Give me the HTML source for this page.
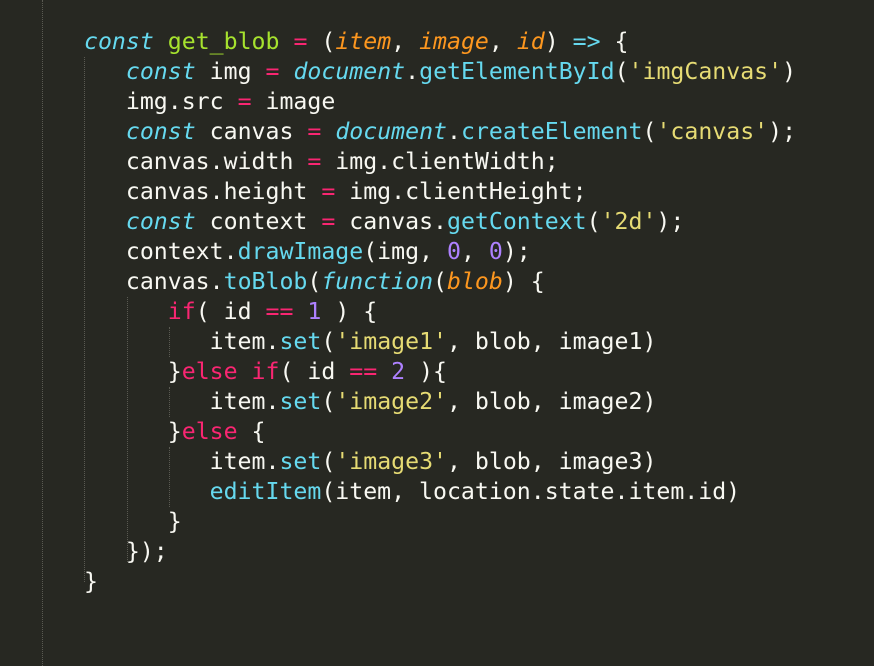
<!DOCTYPE html>
<html><head><meta charset="utf-8"><style>
body{margin:0;width:874px;height:666px;background:#272822;overflow:hidden;position:relative}
pre{position:absolute;left:84px;top:27px;margin:0;font-family:"DejaVu Sans Mono","Liberation Mono",monospace;font-size:23.2px;line-height:30px;color:#f8f8f2}
.k{color:#66d9ef;font-style:italic}.f{color:#a6e22e}.p{color:#f92672}.a{color:#fd971f;font-style:italic}
.c{color:#66d9ef}.s{color:#e6db74}.n{color:#ae81ff}
.g{position:absolute;width:0;border-left:1px dotted #5a5a52}
</style></head><body>
<div class="g" style="left:42px;top:0;height:666px"></div>
<div class="g" style="left:84px;top:57px;height:525px"></div>
<div class="g" style="left:127px;top:297px;height:265px"></div>
<div class="g" style="left:169px;top:327px;height:30px"></div>
<div class="g" style="left:169px;top:387px;height:30px"></div>
<div class="g" style="left:169px;top:447px;height:60px"></div>
<pre><span class="k">const</span> <span class="f">get_blob</span> <span class="p">=</span> (<span class="a">item</span>, <span class="a">image</span>, <span class="a">id</span>) <span class="k" style="font-style:normal">=&gt;</span> {
   <span class="k">const</span> img <span class="p">=</span> <span class="k">document</span>.<span class="c">getElementById</span>(<span class="s">'imgCanvas'</span>)
   img.src <span class="p">=</span> image
   <span class="k">const</span> canvas <span class="p">=</span> <span class="k">document</span>.<span class="c">createElement</span>(<span class="s">'canvas'</span>);
   canvas.width <span class="p">=</span> img.clientWidth;
   canvas.height <span class="p">=</span> img.clientHeight;
   <span class="k">const</span> context <span class="p">=</span> canvas.<span class="c">getContext</span>(<span class="s">'2d'</span>);
   context.<span class="c">drawImage</span>(img, <span class="n">0</span>, <span class="n">0</span>);
   canvas.<span class="c">toBlob</span>(<span class="k">function</span>(<span class="a">blob</span>) {
      <span class="p">if</span>( id <span class="p">==</span> <span class="n">1</span> ) {
         item.<span class="c">set</span>(<span class="s">'image1'</span>, blob, image1)
      }<span class="p">else</span> <span class="p">if</span>( id <span class="p">==</span> <span class="n">2</span> ){
         item.<span class="c">set</span>(<span class="s">'image2'</span>, blob, image2)
      }<span class="p">else</span> {
         item.<span class="c">set</span>(<span class="s">'image3'</span>, blob, image3)
         <span class="c">editItem</span>(item, location.state.item.id)
      }
   });
}</pre>
</body></html>
